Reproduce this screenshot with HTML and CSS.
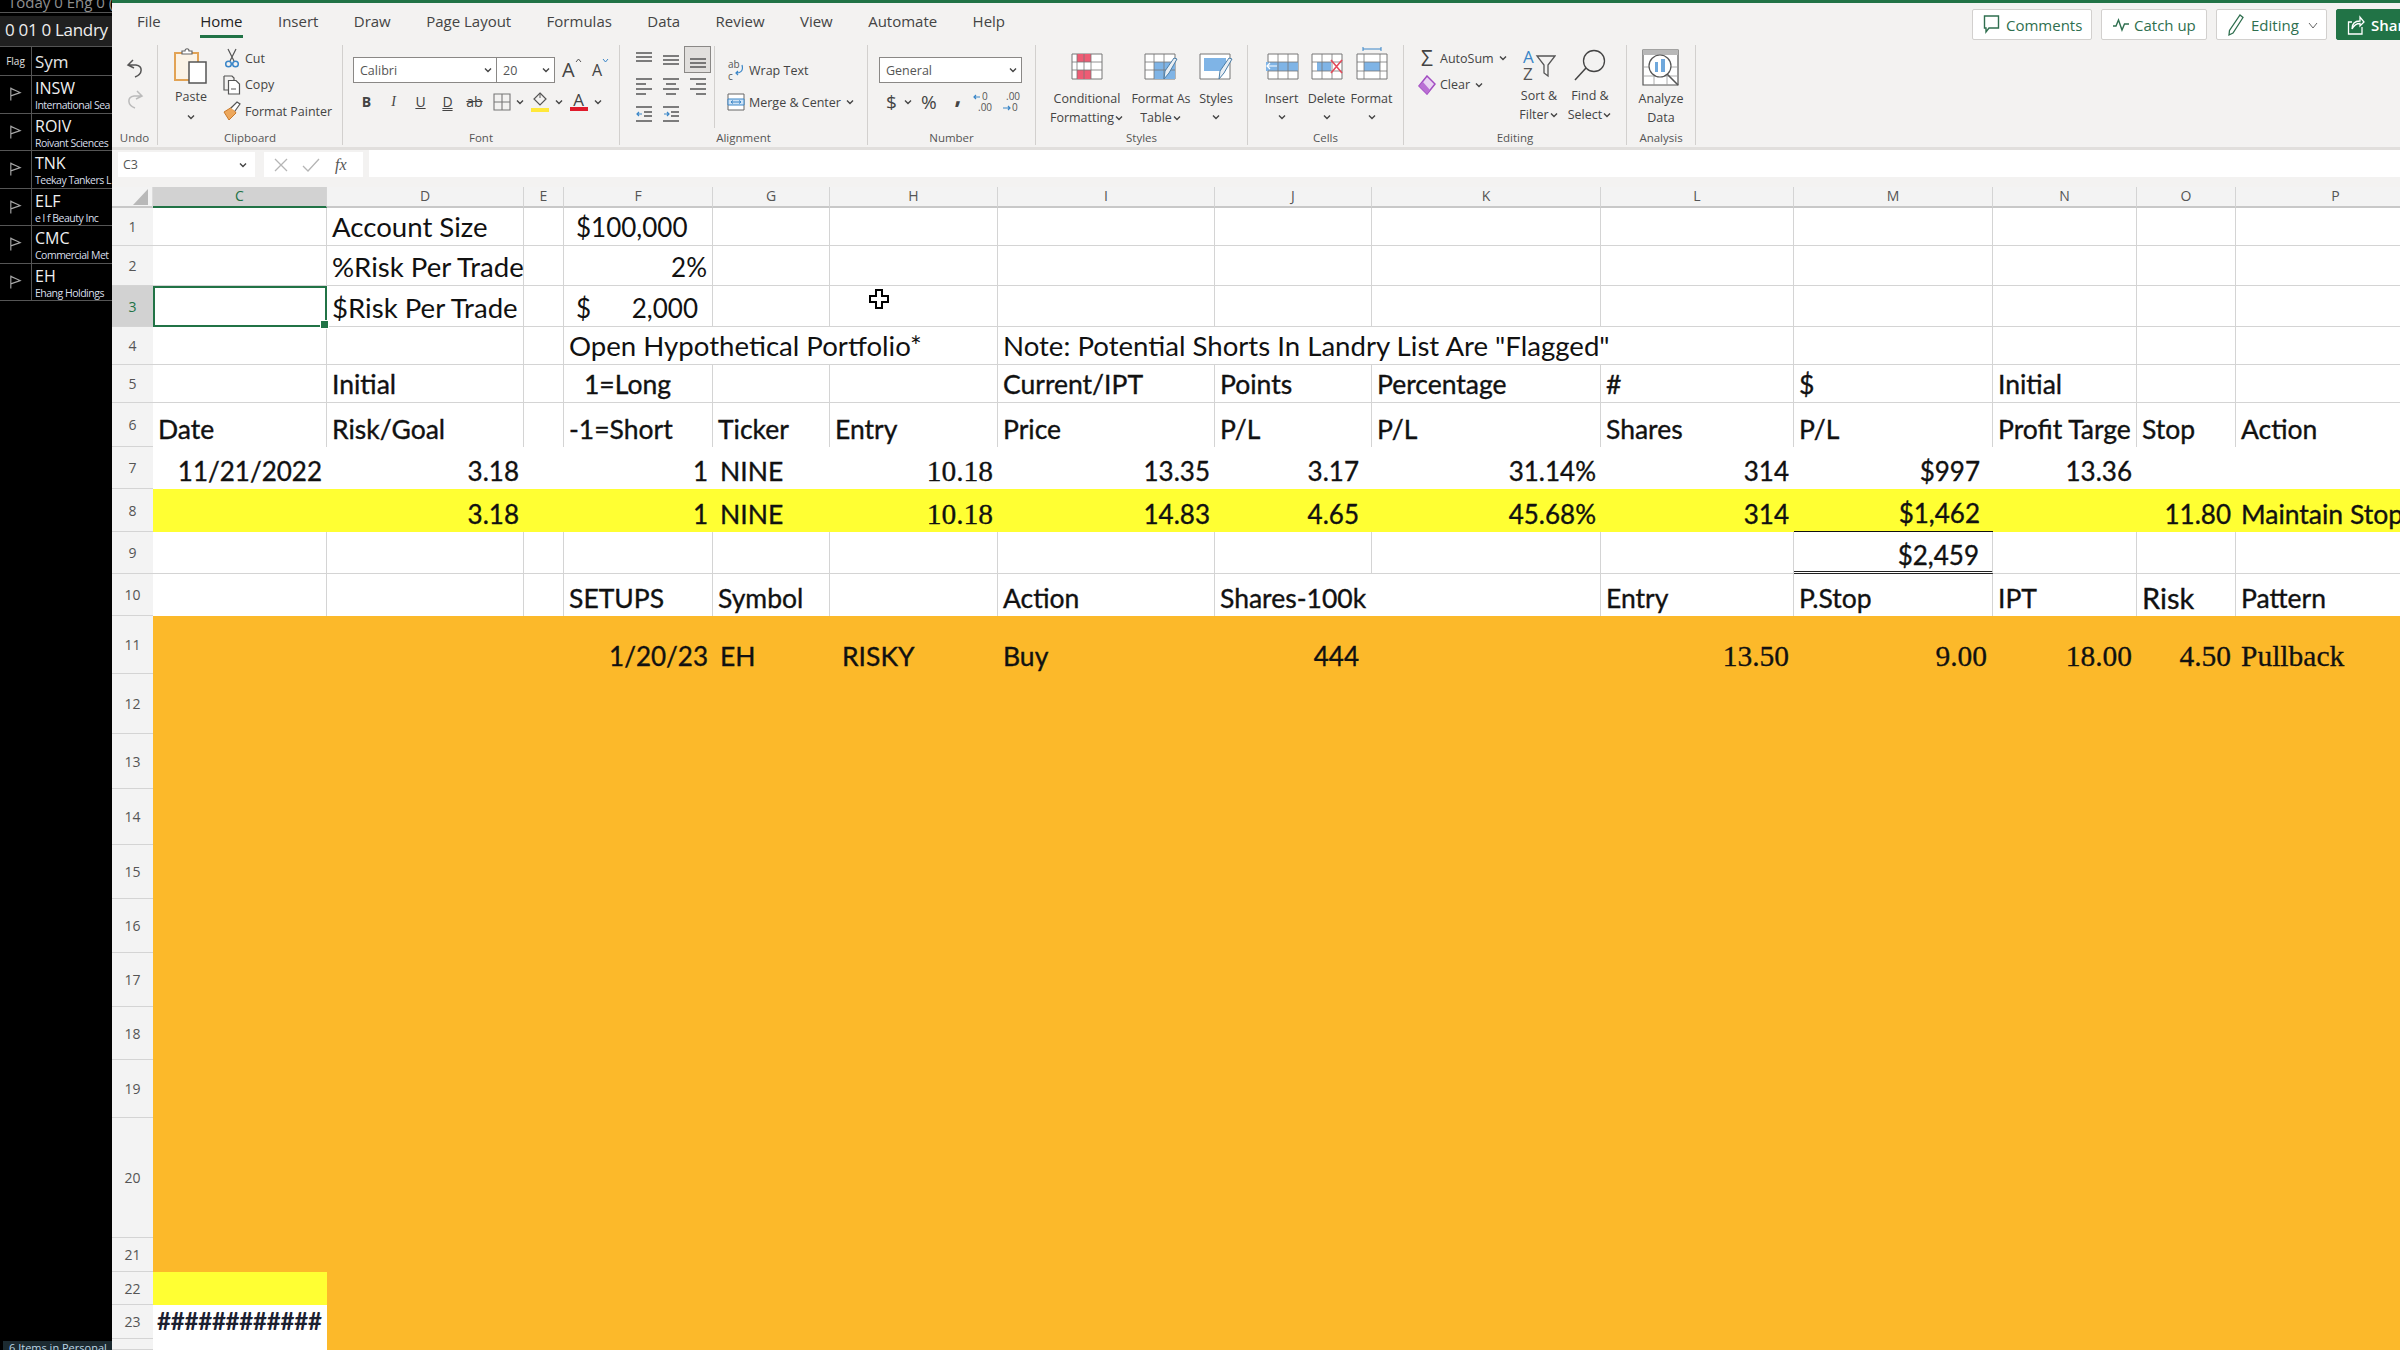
FILE: index.html
```html
<!DOCTYPE html>
<html>
<head>
<meta charset="utf-8">
<title>Excel - Open Hypothetical Portfolio</title>
<link rel="stylesheet" href="styles.css">
</head>
<body>
<svg class="defs" width="0" height="0">
  <symbol id="chev" viewBox="0 0 10 10"><path d="M2 3.5 5 6.5 8 3.5" fill="none" stroke="#444" stroke-width="1.4"/></symbol>
  <symbol id="flag" viewBox="0 0 16 16"><path d="M3 1V15M3 2 13 6.5 3 10" fill="none" stroke="#a8a8a8" stroke-width="1.2"/></symbol>
  <symbol id="al-top" viewBox="0 0 20 20"><path d="M2 3H18M2 7H18M2 11H18" stroke="#555" stroke-width="1.5"/></symbol>
  <symbol id="al-mid" viewBox="0 0 20 20"><path d="M2 6H18M2 10H18M2 14H18" stroke="#555" stroke-width="1.5"/></symbol>
  <symbol id="al-bot" viewBox="0 0 20 20"><path d="M2 9H18M2 13H18M2 17H18" stroke="#555" stroke-width="1.5"/></symbol>
  <symbol id="al-left" viewBox="0 0 20 20"><path d="M2 2H18M2 7H12M2 12H18M2 17H12" stroke="#555" stroke-width="1.5"/></symbol>
  <symbol id="al-center" viewBox="0 0 20 20"><path d="M2 2H18M5 7H15M2 12H18M5 17H15" stroke="#555" stroke-width="1.5"/></symbol>
  <symbol id="al-right" viewBox="0 0 20 20"><path d="M2 2H18M8 7H18M2 12H18M8 17H18" stroke="#555" stroke-width="1.5"/></symbol>
</svg>

<div class="app">
  <aside class="watch">
    <div class="watch-top">Today 0 Eng 0 (</div>
    <div class="watch-title">0 01 0 Landry</div>
    <div class="watch-head"><span class="flag-col">Flag</span><span class="sym-col">Sym</span></div>
    <div class="stock"><span class="flag-col"><svg class="flag"><use href="#flag"/></svg></span><div class="sym-col"><b>INSW</b><small>International Sea</small></div></div>
    <div class="stock"><span class="flag-col"><svg class="flag"><use href="#flag"/></svg></span><div class="sym-col"><b>ROIV</b><small>Roivant Sciences</small></div></div>
    <div class="stock"><span class="flag-col"><svg class="flag"><use href="#flag"/></svg></span><div class="sym-col"><b>TNK</b><small>Teekay Tankers L</small></div></div>
    <div class="stock"><span class="flag-col"><svg class="flag"><use href="#flag"/></svg></span><div class="sym-col"><b>ELF</b><small>e l f Beauty Inc</small></div></div>
    <div class="stock"><span class="flag-col"><svg class="flag"><use href="#flag"/></svg></span><div class="sym-col"><b>CMC</b><small>Commercial Met</small></div></div>
    <div class="stock"><span class="flag-col"><svg class="flag"><use href="#flag"/></svg></span><div class="sym-col"><b>EH</b><small>Ehang Holdings</small></div></div>
    <div class="watch-foot">6 Items in Personal</div>
  </aside>

  <main class="excel">
    <div class="tabs">
      <span class="tab file">File</span>
      <span class="tab active">Home</span>
      <span class="tab">Insert</span>
      <span class="tab">Draw</span>
      <span class="tab">Page Layout</span>
      <span class="tab">Formulas</span>
      <span class="tab">Data</span>
      <span class="tab">Review</span>
      <span class="tab">View</span>
      <span class="tab">Automate</span>
      <span class="tab">Help</span>
      <div class="actions">
        <span class="act act-comments"><svg width="17" height="21" viewBox="0 0 17 21"><path d="M1.5 2H15.5V14H6L3 18V14H1.5Z" fill="none" stroke="#2f6f4f" stroke-width="1.4"/></svg>Comments</span>
        <span class="act act-catch"><svg width="18" height="16" viewBox="0 0 18 16"><path d="M1 9 4 9 6.5 3 10 13 12.5 7 17 7" fill="none" stroke="#2f6f4f" stroke-width="1.4"/></svg>Catch up</span>
        <span class="act act-edit"><svg width="18" height="24" viewBox="0 0 18 24"><path d="M13 2 16 4.5 6 20 2 22 2.500 17.500Z" fill="none" stroke="#2f6f4f" stroke-width="1.3"/></svg>Editing<svg class="act-chev" width="12" height="12" viewBox="0 0 12 12"><path d="M2 4 6 9 10 4" fill="none" stroke="#666" stroke-width="1"/></svg></span>
        <span class="act share"><svg width="18" height="22" viewBox="0 0 18 22"><path d="M5 8H1.500V20H15V13M5 15C5 9 9 7 13 7V3L17 8 13 12V9.500C9 9.500 7 11 5 15Z" fill="none" stroke="#fff" stroke-width="1.3"/></svg>Share</span>
      </div>
    </div>

    <div class="ribbon">
      <section class="group g-undo">
        <div class="body undo-body">
          <svg width="20" height="22" viewBox="0 0 20 22"><path d="M8 2 3 7 9 10M3.500 7H11C18 8 18 16 10 19" fill="none" stroke="#555" stroke-width="1.5"/></svg>
          <svg width="20" height="22" viewBox="0 0 20 22"><path d="M12 2 17 7 11 10M16.500 7H9C2 8 2 16 10 19" fill="none" stroke="#bbb" stroke-width="1.5"/></svg>
        </div>
        <div class="label">Undo</div>
      </section>

      <section class="group g-clip">
        <div class="body clip-body">
          <div class="paste">
            <svg width="34" height="36" viewBox="0 0 34 36"><path d="M1 5H24V32H1Z" fill="#fbf3e6" stroke="#e2a355" stroke-width="2"/><path d="M8 6V3H11C11 0 15 0 15 3H18V6Z" fill="#fff" stroke="#666" stroke-width="1.2"/><path d="M15 14H32V35H15Z" fill="#fff" stroke="#555" stroke-width="1.5"/></svg>
            <span>Paste</span>
            <svg class="chev"><use href="#chev"/></svg>
          </div>
          <div class="clip-list">
            <div class="clip-row"><svg width="16" height="20" viewBox="0 0 16 20"><path d="M4 1 10 13M12 1 6 13" stroke="#555" stroke-width="1.2"/><circle cx="4.500" cy="16" r="2.800" fill="none" stroke="#3a86c8" stroke-width="1.500"/><circle cx="11.500" cy="16" r="2.800" fill="none" stroke="#3a86c8" stroke-width="1.500"/></svg>Cut</div>
            <div class="clip-row"><svg width="18" height="20" viewBox="0 0 18 20"><path d="M1 1H9L11 3V5M5 15H1V1" fill="none" stroke="#555" stroke-width="1.200"/><path d="M5.500 5.500H13L16.500 9V19H5.500Z" fill="#fff" stroke="#555" stroke-width="1.200"/><path d="M8 14H13" stroke="#555"/></svg>Copy</div>
            <div class="clip-row"><svg width="18" height="20" viewBox="0 0 18 20"><path d="M1 11 9 6 13 12 6 19Z" fill="#eda85d" stroke="#c97a2b"/><path d="M8 7 14 1 17 3 12 10" fill="#fff" stroke="#555" stroke-width="1.200"/></svg>Format Painter</div>
          </div>
        </div>
        <div class="label">Clipboard</div>
      </section>

      <section class="group g-font">
        <div class="body font-body">
          <div class="font-row">
            <div class="combo combo-font">Calibri<svg class="chev"><use href="#chev"/></svg></div>
            <div class="combo combo-size">20<svg class="chev"><use href="#chev"/></svg></div>
            <span class="grow">A<svg width="7" height="5" viewBox="0 0 7 5"><path d="M1 4 3.500 1 6 4" fill="none" stroke="#555"/></svg></span>
            <span class="shrink">A<svg width="7" height="5" viewBox="0 0 7 5"><path d="M1 1 3.500 4 6 1" fill="none" stroke="#3a86c8"/></svg></span>
          </div>
          <div class="font-row fmt-row">
            <span class="slot bold">B</span>
            <span class="slot ital">I</span>
            <span class="slot under">U</span>
            <span class="slot dbl">D</span>
            <span class="slot strike">ab</span>
            <span class="slot"><svg width="18" height="18" viewBox="0 0 18 18"><path d="M1 1H17V17H1ZM9 1V17M1 9H17" fill="none" stroke="#777" stroke-width="1.100"/></svg></span>
            <svg class="chev"><use href="#chev"/></svg>
            <span class="slot slot-col"><svg width="18" height="16" viewBox="0 0 18 16"><path d="M9 1 15 7 9 13 3 7Z" fill="none" stroke="#555" stroke-width="1.200"/><path d="M9 1V6" stroke="#555"/></svg><i class="bar bar-yellow"></i></span>
            <svg class="chev"><use href="#chev"/></svg>
            <span class="slot slot-col color-a">A<i class="bar bar-red"></i></span>
            <svg class="chev"><use href="#chev"/></svg>
          </div>
        </div>
        <div class="label">Font</div>
      </section>

      <section class="group g-align">
        <div class="body align-body">
          <div class="align-grid">
            <svg class="al"><use href="#al-top"/></svg>
            <svg class="al"><use href="#al-mid"/></svg>
            <span class="al-on"><svg class="al"><use href="#al-bot"/></svg></span>
            <svg class="al"><use href="#al-left"/></svg>
            <svg class="al"><use href="#al-center"/></svg>
            <svg class="al"><use href="#al-right"/></svg>
            <svg class="al" viewBox="0 0 20 20"><path d="M2 3H18M10 8H18M10 12H18M2 17H18" stroke="#555" stroke-width="1.500"/><path d="M8 10H3M5 8 3 10 5 12" fill="none" stroke="#3a86c8" stroke-width="1.200"/></svg>
            <svg class="al" viewBox="0 0 20 20"><path d="M2 3H18M10 8H18M10 12H18M2 17H18" stroke="#555" stroke-width="1.500"/><path d="M3 10H8M6 8 8 10 6 12" fill="none" stroke="#3a86c8" stroke-width="1.200"/></svg>
          </div>
          <div class="wrap-list">
            <div class="wrap-row"><svg width="18" height="24" viewBox="0 0 18 24"><text x="1" y="10" class="mini">ab</text><text x="1" y="22" class="mini">c</text><path d="M15 7C17 14 12 15 9 15M11 13 9 15 11 17" fill="none" stroke="#3a86c8" stroke-width="1.200"/></svg>Wrap Text</div>
            <div class="wrap-row"><svg width="18" height="20" viewBox="0 0 18 20"><path d="M1 2H17V18H1Z" fill="#fff" stroke="#666"/><path d="M1 7H17V13H1Z" fill="#cfe3f5" stroke="#3a86c8"/><path d="M4 10H14M6 8.500 4 10 6 11.500M12 8.500 14 10 12 11.500" fill="none" stroke="#3a86c8"/></svg>Merge &amp; Center<svg class="chev"><use href="#chev"/></svg></div>
          </div>
        </div>
        <div class="label">Alignment</div>
      </section>

      <section class="group g-num">
        <div class="body num-body">
          <div class="combo combo-num">General<svg class="chev"><use href="#chev"/></svg></div>
          <div class="num-row">
            <span class="num-dollar">$</span>
            <svg class="chev"><use href="#chev"/></svg>
            <span class="num-pct">%</span>
            <span class="num-comma">,</span>
            <svg width="20" height="22" viewBox="0 0 20 22"><text x="9" y="9" class="mini">0</text><text x="5" y="20" class="mini">.00</text><path d="M7 6H1M3 4 1 6 3 8" fill="none" stroke="#3a86c8" stroke-width="1.200"/></svg>
            <svg class="num-dec" width="20" height="22" viewBox="0 0 20 22"><text x="5" y="9" class="mini">.00</text><text x="11" y="20" class="mini">0</text><path d="M2 17H9M7 15 9 17 7 19" fill="none" stroke="#3a86c8" stroke-width="1.200"/></svg>
          </div>
        </div>
        <div class="label">Number</div>
      </section>

      <section class="group g-styles">
        <div class="body big-body">
          <div class="big w-cond">
            <svg width="32" height="27" viewBox="0 0 32 27"><path d="M1 1H31V26H1Z" fill="#fff" stroke="#777"/><path d="M6 1H20V9H6ZM6 17H20V26H6Z" fill="#ee5c74"/><path d="M1 9H31M1 17H31M6 1V26M13 1V26M20 1V26" stroke="#777" stroke-width=".8"/></svg>
            <span>Conditional</span>
            <span>Formatting<svg class="chev"><use href="#chev"/></svg></span>
          </div>
          <div class="big w-table">
            <svg width="34" height="27" viewBox="0 0 34 27"><path d="M1 1H31V26H1Z" fill="#fff" stroke="#777"/><path d="M10 9H31V26H10Z" fill="#7fb4e6"/><path d="M1 9H31M1 17H31M10 1V26M20 1V26" stroke="#777" stroke-width=".8"/><path d="M33 6 25 20 20 26 21 18 30 5Z" fill="#e9eef3" stroke="#4b7ea8"/></svg>
            <span>Format As</span>
            <span>Table<svg class="chev"><use href="#chev"/></svg></span>
          </div>
          <div class="big w-style">
            <svg width="34" height="27" viewBox="0 0 34 27"><path d="M1 1H31V26H1Z" fill="#fff" stroke="#777"/><path d="M5 5H27V18H5Z" fill="#7fb4e6"/><path d="M33 6 25 20 20 26 21 18 30 5Z" fill="#e9eef3" stroke="#4b7ea8"/></svg>
            <span>Styles</span>
            <svg class="chev"><use href="#chev"/></svg>
          </div>
        </div>
        <div class="label">Styles</div>
      </section>

      <section class="group g-cells">
        <div class="body big-body">
          <div class="big w-cell">
            <svg width="34" height="27" viewBox="0 0 34 27"><path d="M3 1H33V26H3Z" fill="#fff" stroke="#777"/><path d="M1 9H33V18H1Z" fill="#7fb4e6"/><path d="M3 9H33M3 18H33M13 1V26M23 1V26" stroke="#777" stroke-width=".8"/><path d="M12 13H2M5 10 2 13 5 16" fill="none" stroke="#fff" stroke-width="1.200"/></svg>
            <span>Insert</span>
            <svg class="chev"><use href="#chev"/></svg>
          </div>
          <div class="big w-cell">
            <svg width="32" height="27" viewBox="0 0 32 27"><path d="M1 1H31V26H1Z" fill="#fff" stroke="#777"/><path d="M6 9H20V18H6Z" fill="#7fb4e6"/><path d="M1 9H31M1 18H31M11 1V26M21 1V26" stroke="#777" stroke-width=".8"/><path d="M20 7 31 20M31 7 20 20" stroke="#e44a5a" stroke-width="1.600"/></svg>
            <span>Delete</span>
            <svg class="chev"><use href="#chev"/></svg>
          </div>
          <div class="big w-cell">
            <svg width="32" height="33" viewBox="0 0 32 33" class="fmt-cell"><path d="M7 2H25M7 0V4M25 0V4" stroke="#3a86c8"/><path d="M1 7H31V32H1Z" fill="#fff" stroke="#777"/><path d="M8 15H24V24H8Z" fill="#7fb4e6"/><path d="M1 15H31M1 24H31M8 7V32M24 7V32" stroke="#777" stroke-width=".8"/></svg>
            <span>Format</span>
            <svg class="chev"><use href="#chev"/></svg>
          </div>
        </div>
        <div class="label">Cells</div>
      </section>

      <section class="group g-edit">
        <div class="body edit-body">
          <div class="edit-list">
            <div class="clip-row"><span class="sigma">&Sigma;</span>AutoSum<svg class="chev"><use href="#chev"/></svg></div>
            <div class="clip-row"><svg class="eraser" width="18" height="20" viewBox="0 0 18 20"><path d="M9 1 17 9 9 19 1 11Z" fill="#e9d3f2" stroke="#a24cc2" stroke-width="1.500"/><path d="M1 11 9 19 12 15 5 7Z" fill="#b96fd4"/></svg>Clear<svg class="chev"><use href="#chev"/></svg></div>
          </div>
          <div class="big w-sort">
            <svg width="34" height="32" viewBox="0 0 34 32"><text x="1" y="14" class="az az-a">A</text><text x="1" y="31" class="az">Z</text><path d="M15 7H33L26 16V27L22 24V16Z" fill="none" stroke="#555" stroke-width="1.300"/></svg>
            <span>Sort &amp;</span>
            <span>Filter<svg class="chev"><use href="#chev"/></svg></span>
          </div>
          <div class="big w-find">
            <svg width="34" height="32" viewBox="0 0 34 32"><circle cx="21" cy="12" r="10.500" fill="none" stroke="#444" stroke-width="1.300"/><path d="M13 19 2 31" stroke="#444" stroke-width="1.500"/></svg>
            <span>Find &amp;</span>
            <span>Select<svg class="chev"><use href="#chev"/></svg></span>
          </div>
        </div>
        <div class="label">Editing</div>
      </section>

      <section class="group g-analysis">
        <div class="body big-body">
          <div class="big w-analyze">
            <svg width="38" height="37" viewBox="0 0 38 37"><path d="M1 1H36V36H1Z" fill="#fff" stroke="#555" stroke-width="1.200"/><path d="M1 1H36V6H1Z" fill="#b8b8b8"/><path d="M1 18H36M1 27H36M12 27V36M25 27V36" stroke="#999" stroke-width=".8"/><circle cx="18" cy="17" r="11" fill="#fff" stroke="#555" stroke-width="1.200"/><path d="M13 13H16V23H13ZM19 10H23V23H19Z" fill="#6fa8dc"/><path d="M25 25 36 36" stroke="#555" stroke-width="1.600"/></svg>
            <span>Analyze</span>
            <span>Data</span>
          </div>
        </div>
        <div class="label">Analysis</div>
      </section>
    </div>

    <div class="fbar">
      <div class="namebox">C3<svg class="chev"><use href="#chev"/></svg></div>
      <div class="fctl">
        <svg width="16" height="16" viewBox="0 0 16 16"><path d="M2 2 14 14M14 2 2 14" stroke="#b5b5b5" stroke-width="1.300"/></svg>
        <svg width="18" height="16" viewBox="0 0 18 16"><path d="M1 9 6 14 17 2" fill="none" stroke="#b5b5b5" stroke-width="1.300"/></svg>
        <span class="fx">fx</span>
      </div>
      <div class="finput"></div>
    </div>

    <div class="sheet">
      <!-- column headers -->
      <div class="corner"><svg width="18" height="18" viewBox="0 0 18 18"><path d="M16 1V17H1Z" fill="#b8b8b8"/></svg></div>
      <div class="ch ch-on">C</div><div class="ch">D</div><div class="ch">E</div><div class="ch">F</div><div class="ch">G</div><div class="ch">H</div><div class="ch">I</div><div class="ch">J</div><div class="ch">K</div><div class="ch">L</div><div class="ch">M</div><div class="ch">N</div><div class="ch">O</div><div class="ch">P</div>

      <!-- 1 -->
      <div class="rh">1</div><div class="c"></div><div class="c t">Account Size</div><div class="c"></div><div class="c in">$100,000</div><div class="c"></div><div class="c"></div><div class="c"></div><div class="c"></div><div class="c"></div><div class="c"></div><div class="c"></div><div class="c"></div><div class="c"></div><div class="c"></div>
      <!-- 2 -->
      <div class="rh">2</div><div class="c"></div><div class="c t">%Risk Per Trade</div><div class="c"></div><div class="c r">2%</div><div class="c"></div><div class="c"></div><div class="c"></div><div class="c"></div><div class="c"></div><div class="c"></div><div class="c"></div><div class="c"></div><div class="c"></div><div class="c"></div>
      <!-- 3 -->
      <div class="rh rh-on">3</div><div class="c sel"></div><div class="c t">$Risk Per Trade</div><div class="c"></div><div class="c acct"><span>$</span><span>2,000</span></div><div class="c"></div><div class="c"></div><div class="c"></div><div class="c"></div><div class="c"></div><div class="c"></div><div class="c"></div><div class="c"></div><div class="c"></div><div class="c"></div>
      <!-- 4 -->
      <div class="rh">4</div><div class="c"></div><div class="c"></div><div class="c"></div><div class="c s3 t">Open Hypothetical Portfolio*</div><div class="c s4 t">Note: Potential Shorts In Landry List Are "Flagged"</div><div class="c"></div><div class="c"></div><div class="c"></div><div class="c"></div>
      <!-- 5 -->
      <div class="rh">5</div><div class="c"></div><div class="c h">Initial</div><div class="c"></div><div class="c h long">1=Long</div><div class="c"></div><div class="c"></div><div class="c h">Current/IPT</div><div class="c h">Points</div><div class="c h">Percentage</div><div class="c h">#</div><div class="c h">$</div><div class="c h">Initial</div><div class="c"></div><div class="c"></div>
      <!-- 6 -->
      <div class="rh">6</div><div class="c nb h">Date</div><div class="c nb h">Risk/Goal</div><div class="c nb"></div><div class="c nb h">-1=Short</div><div class="c nb h">Ticker</div><div class="c nb h">Entry</div><div class="c nb h">Price</div><div class="c nb h">P/L</div><div class="c nb h">P/L</div><div class="c nb h">Shares</div><div class="c nb h">P/L</div><div class="c nb h targe">Profit Targe</div><div class="c nb h">Stop</div><div class="c nb h">Action</div>
      <!-- 7 -->
      <div class="rh">7</div><div class="c x r v">11/21/2022</div><div class="c x r v">3.18</div><div class="c x"></div><div class="c x r v">1</div><div class="c x h tick">NINE</div><div class="c x r serif">10.18</div><div class="c x r v">13.35</div><div class="c x r v pad">3.17</div><div class="c x r v">31.14%</div><div class="c x r v">314</div><div class="c x r v pad">$997</div><div class="c x r v">13.36</div><div class="c x"></div><div class="c x"></div>
      <!-- 8 -->
      <div class="rh">8</div><div class="c x y"></div><div class="c x y r v">3.18</div><div class="c x y"></div><div class="c x y r v">1</div><div class="c x y h tick">NINE</div><div class="c x y r serif">10.18</div><div class="c x y r v">14.83</div><div class="c x y r v pad">4.65</div><div class="c x y r v">45.68%</div><div class="c x y r v">314</div><div class="c x y r v pad sub">$1,462</div><div class="c x y"></div><div class="c x y r v">11.80</div><div class="c x y h">Maintain Stop</div>
      <!-- 9 -->
      <div class="rh">9</div><div class="c"></div><div class="c"></div><div class="c"></div><div class="c"></div><div class="c"></div><div class="c"></div><div class="c"></div><div class="c"></div><div class="c"></div><div class="c"></div><div class="c r v pad total">$2,459</div><div class="c"></div><div class="c"></div><div class="c"></div>
      <!-- 10 -->
      <div class="rh">10</div><div class="c nb"></div><div class="c nb"></div><div class="c nb"></div><div class="c nb h">SETUPS</div><div class="c nb h">Symbol</div><div class="c nb"></div><div class="c nb h">Action</div><div class="c nb s2 h">Shares-100k</div><div class="c nb h">Entry</div><div class="c nb h">P.Stop</div><div class="c nb h">IPT</div><div class="c nb h risk">Risk</div><div class="c nb h">Pattern</div>
      <!-- 11 -->
      <div class="rh">11</div><div class="c x o"></div><div class="c x o"></div><div class="c x o"></div><div class="c x o r v">1/20/23</div><div class="c x o h tick">EH</div><div class="c x o h risky">RISKY</div><div class="c x o h">Buy</div><div class="c x o r v pad">444</div><div class="c x o"></div><div class="c x o r serif">13.50</div><div class="c x o r serif tight">9.00</div><div class="c x o r serif">18.00</div><div class="c x o r serif">4.50</div><div class="c x o serif">Pullback</div>
      <!-- 12 to 21 are one orange block -->
      <div class="rh">12</div><div class="fill fill-wide"></div>
      <div class="rh">13</div>
      <div class="rh">14</div>
      <div class="rh">15</div>
      <div class="rh">16</div>
      <div class="rh">17</div>
      <div class="rh">18</div>
      <div class="rh">19</div>
      <div class="rh">20</div>
      <div class="rh">21</div>
      <!-- 22 to 24 -->
      <div class="rh">22</div><div class="c x y"></div><div class="fill fill-rest"></div>
      <div class="rh">23</div><div class="c x hashes">############</div>
      <div class="rh"></div><div class="c x"></div>

      <svg class="cursor" width="20" height="20" viewBox="0 0 20 20"><path d="M7 1H13V7H19V13H13V19H7V13H1V7H7Z" fill="#fff" stroke="#000" stroke-width="2"/></svg>
    </div>
  </main>
</div>
</body>
</html>
```

FILE: styles.css
```css
* { box-sizing: border-box; }

html, body {
    margin: 0;
    width: 2400px;
    height: 1350px;
    overflow: hidden;
    background: #000;
}

.defs { position: absolute; }

.app {
    display: flex;
    width: 2400px;
    height: 1350px;
    overflow: hidden;
}

/* Watch list on the left */
.watch {
    width: 112px;
    flex: none;
    display: flex;
    flex-direction: column;
    overflow: hidden;
    position: relative;
    background: #000;
    color: #e6e6e6;
    font-family: "Open Sans", sans-serif;
    white-space: nowrap;
}

.watch-top {
    line-height: 11px;
    margin-top: -3px;
    height: 16px;
    font-size: 15px;
    color: #8f8f8f;
    padding-left: 8px;
    border-bottom: 1px solid #555;
}

.watch-title {
    height: 31px;
    margin-top: 3px;
    background: #202020;
    padding-left: 5px;
    font-size: 17px;
    letter-spacing: -.3px;
    line-height: 27px;
    color: #ededed;
    border-bottom: 1px solid #555;
}

.watch-head {
    display: flex;
    height: 29px;
    align-items: center;
    border-bottom: 1px solid #555;
}

.flag-col {
    width: 32px;
    flex: none;
    display: flex;
    justify-content: center;
    align-self: stretch;
    align-items: center;
    border-right: 1px solid #555;
    font-size: 10px;
    color: #e0e0e0;
}

.sym-col {
    padding-left: 3px;
    font-size: 17px;
}

.stock {
    display: flex;
    height: 37.5px;
    border-bottom: 1px solid #555;
}

.stock .sym-col {
    display: flex;
    flex-direction: column;
    padding-top: 2px;
}

.stock b {
    font-weight: 400;
    font-size: 16px;
    line-height: 21px;
    color: #f0f0f0;
}

.stock small {
    font-size: 10.5px;
    line-height: 13px;
    letter-spacing: -.5px;
    color: #d8dfea;
}

.flag { width: 15px; height: 16px; }

.watch-foot {
    position: absolute;
    left: 3px;
    bottom: -6px;
    width: 109px;
    height: 15px;
    background: #1c2a30;
    color: #bcd6e4;
    font-size: 11px;
    line-height: 14px;
    padding-left: 6px;
}

/* Excel window */
.excel {
    flex: 1;
    min-width: 0;
    display: flex;
    flex-direction: column;
    background: #f3f2f1;
    font-family: "Open Sans", sans-serif;
    color: #444;
    font-size: 12.5px;
    white-space: nowrap;
    border-top: 3px solid #217346;
}

.tabs {
    height: 42px;
    flex: none;
    display: flex;
    align-items: flex-start;
    gap: 35.4px;
    padding-left: 25px;
    font-size: 15px;
}

.tab {
    padding-top: 8px;
    height: 35px;
    position: relative;
}

.tab.file { margin-right: 4px; }

.tab.active {
    color: #222;
    font-weight: 500;
}

.tab.active::after {
    content: "";
    position: absolute;
    left: 0;
    right: 0;
    bottom: 0;
    height: 3px;
    background: #217346;
}

.actions {
    margin-left: auto;
    display: flex;
    gap: 9px;
    padding-top: 6px;
    margin-right: -60px;
}

.act {
    height: 31px;
    display: flex;
    align-items: center;
    gap: 6px;
    background: #fff;
    border: 1px solid #d2d0ce;
    border-radius: 2px;
    color: #2f6f4f;
    font-size: 15px;
    padding-left: 10px;
}

.act-comments { width: 120px; }
.act-catch { width: 106px; gap: 4px; }
.act-edit { width: 111px; }
.act-chev { margin-left: 2px; }

.share {
    width: 124px;
    background: #217346;
    border-color: #217346;
    color: #fff;
    font-weight: 600;
}

/* Ribbon */
.ribbon {
    height: 105px;
    flex: none;
    display: flex;
    border-bottom: 3px solid #e1dfdd;
}

.group {
    display: flex;
    flex-direction: column;
    height: 100px;
    flex: none;
    border-right: 1px solid #d2d0ce;
}

.body {
    flex: 1;
    min-height: 0;
    display: flex;
}

.label {
    height: 14px;
    line-height: 14px;
    text-align: center;
    font-size: 11.5px;
    color: #555;
}

.g-undo { width: 46px; }
.g-clip { width: 185px; }
.g-font { width: 277px; }
.g-align { width: 248px; }
.g-num { width: 168px; }
.g-styles { width: 212px; }
.g-cells { width: 156px; }
.g-edit { width: 223px; }
.g-analysis { width: 69px; }

.chev {
    width: 10px;
    height: 10px;
    flex: none;
}

.undo-body {
    flex-direction: column;
    align-items: center;
    gap: 9px;
    padding-top: 13px;
}

.clip-body { padding-left: 5px; }

.paste {
    width: 56px;
    display: flex;
    flex-direction: column;
    align-items: center;
    padding-top: 3px;
}

.paste span { margin-top: 4px; line-height: 18px; }
.paste .chev { margin-top: 6px; }

.clip-list { padding-left: 4px; }

.clip-row {
    height: 26.5px;
    display: flex;
    align-items: center;
    gap: 4px;
}

.clip-row svg:first-child { width: 18px; }

/* Font group */
.font-body {
    flex-direction: column;
    padding: 12px 0 0 10px;
}

.font-row {
    display: flex;
    align-items: center;
}

.combo {
    height: 26px;
    background: #fff;
    border: 1px solid #8a8886;
    display: flex;
    align-items: center;
    justify-content: space-between;
    padding: 0 3px 0 6px;
    color: #555;
}

.combo-font { width: 143px; border-right: 0; }
.combo-size { width: 59px; }
.combo-num { width: 143px; }

.grow, .shrink {
    display: flex;
    align-items: flex-start;
    margin-left: 7px;
    width: 22px;
    font-size: 20px;
    line-height: 24px;
    color: #444;
}

.shrink { font-size: 16px; margin-left: 8px; }

.fmt-row {
    margin-top: 5px;
    height: 27px;
}

.slot {
    width: 27px;
    display: flex;
    justify-content: center;
    align-items: center;
    font-size: 14px;
    color: #444;
}

.slot-col {
    width: 29px;
    flex-direction: column;
    line-height: 14px;
}

.bold { font-weight: 700; }
.ital { font-style: italic; font-family: "Liberation Serif", serif; }
.under { text-decoration: underline; }
.dbl { text-decoration: underline double; }
.strike { text-decoration: line-through; }

.bar {
    display: block;
    width: 18px;
    height: 4px;
}

.bar-yellow { background: #ffe83a; }
.bar-red { background: #e01b2b; }
.color-a { font-size: 17px; }

/* Alignment group */
.align-body { padding: 1px 0 0 10px; }

.align-grid {
    width: 85px;
    display: grid;
    grid-template-columns: repeat(3, 27px);
    grid-auto-rows: 27px;
    place-items: center;
    height: 82px;
    border-right: 1px solid #d2d0ce;
}

.al { width: 20px; height: 20px; }

.al-on {
    width: 27px;
    height: 27px;
    display: flex;
    align-items: center;
    justify-content: center;
    background: #e1dfdd;
    border: 1px solid #8a8886;
}

.wrap-list {
    padding: 8px 0 0 12px;
}

.wrap-row {
    height: 32px;
    display: flex;
    align-items: center;
    gap: 4px;
}

.mini {
    font-size: 10px;
    fill: #555;
}

/* Number group */
.num-body {
    flex-direction: column;
    padding: 12px 0 0 11px;
}

.num-row {
    margin-top: 5px;
    height: 27px;
    display: flex;
    align-items: center;
    gap: 6px;
    padding-left: 7px;
}

.num-dollar, .num-pct, .num-comma {
    font-size: 19px;
    line-height: 26px;
}

.num-pct { margin-left: 2px; }
.num-comma { font-size: 24px; font-weight: 700; width: 12px; margin: -14px 0 0 12px; }
.num-dec { margin-left: 2px; }

/* Big buttons with two label lines */
.big-body { padding-left: 11px; }

.big {
    display: flex;
    flex-direction: column;
    align-items: center;
    padding-top: 8px;
    line-height: 19px;
}

.big > svg:first-child {
    height: 27px;
    margin-bottom: 9px;
    flex: none;
}

.big span {
    display: flex;
    align-items: center;
}

.big > .chev { margin-top: 4px; }

.w-cond { width: 80px; }
.w-table { width: 68px; }
.w-style { width: 42px; }
.w-cell { width: 45px; }
.w-sort { width: 50px; }
.w-find { width: 52px; }
.w-analyze { width: 60px; padding-top: 4px; }

.g-analysis .big-body { padding-left: 4px; }
.big > svg.fmt-cell { height: 33px; margin: -6px 0 9px; }
.w-sort > svg:first-child, .w-find > svg:first-child { height: 32px; margin: -4px 0 5px; }
.w-analyze > svg:first-child { height: 37px; margin: 0 0 3px; }

.edit-body { padding-left: 14px; }
.edit-list { width: 96px; }

.sigma {
    width: 18px;
    font-size: 21px;
    line-height: 24px;
    text-align: center;
}

.az {
    font-size: 17px;
    fill: #555;
}

.az-a { fill: #3a86c8; }

/* Formula bar */
.fbar {
    height: 27px;
    flex: none;
    display: flex;
    gap: 6px;
    padding-left: 6px;
    background: #f3f2f1;
    color: #555;
}

.namebox, .fctl, .finput {
    background: #fff;
    display: flex;
    align-items: center;
}

.namebox {
    width: 137px;
    justify-content: space-between;
    padding: 0 7px 0 5px;
    margin: 2px 3px 0 0;
}

.fctl {
    width: 99px;
    gap: 13px;
    padding-left: 9px;
    margin-top: 2px;
}

.fx {
    font-family: "Liberation Serif", serif;
    font-style: italic;
    font-size: 16px;
    margin-left: 2px;
}

.finput { flex: 1; margin-right: 0; }

/* Sheet */
.sheet {
    flex: 1;
    min-height: 0;
    position: relative;
    display: grid;
    margin-top: 10px;
    background: #fff;
    grid-template-columns: 41px 174px 197px 40px 149px 117px 168px 217px 157px 229px 193px 199px 144px 99px 200px;
    grid-template-rows: 21px 38px 40px 41px 38px 38px 44px 42px 43px 42px 42px 58px 60px 55px 56px 54px 54px 54px 53px 58px 120px 34px 33px 34px 11px;
    font-family: Lato, sans-serif;
    font-size: 26px;
    color: #111;
    overflow: hidden;
}

.corner {
    background: #f3f3f3;
    border-bottom: 2px solid #c8c8c8;
    border-right: 1px solid #dcdcdc;
    display: flex;
    align-items: center;
    justify-content: flex-end;
    padding-right: 2px;
}

.ch {
    background: #f3f3f3;
    border-right: 1px solid #d4d4d4;
    border-bottom: 2px solid #c8c8c8;
    text-align: center;
    font-family: "Open Sans", sans-serif;
    font-size: 14px;
    line-height: 18px;
    color: #555;
}

.ch-on {
    background: #d2d2d2;
    border-bottom-color: #217346;
    color: #217346;
}

.rh {
    grid-column: 1;
    background: #f3f3f3;
    border-bottom: 1px solid #d4d4d4;
    display: flex;
    align-items: center;
    justify-content: center;
    font-family: "Open Sans", sans-serif;
    font-size: 14px;
    color: #555;
}

.rh-on {
    background: #d2d2d2;
    color: #217346;
}

.c {
    display: flex;
    align-items: flex-end;
    padding: 0 5px 3px;
    line-height: 30px;
    white-space: nowrap;
    border-right: 1px solid #d4d4d4;
    border-bottom: 1px solid #d4d4d4;
    min-width: 0;
}

.r { justify-content: flex-end; }
.nb { border-bottom: 0; }
.x { border-right: 0; border-bottom: 0; }
.y { background: #ffff33; }
.o { background: #fcb92a; }
.t { font-size: 27.6px; }
.h { font-size: 26.5px; -webkit-text-stroke: .35px #111; }
.v { -webkit-text-stroke: .35px #111; }
.s2 { grid-column: span 2; }
.s3 { grid-column: span 3; }
.s4 { grid-column: span 4; }
.in { padding-left: 12px; }
.long { padding-left: 20px; }
.acct { justify-content: space-between; padding: 0 14px 3px 12px; }
.tick { padding-left: 7px; }
.pad { padding-right: 13px; }
.tight { padding-right: 6px; }
.risky { padding-left: 12px; }
.risk { font-size: 29px; }
.sub { border-bottom: 1px solid #111; }
.total { border-bottom: 3px double #222; padding-bottom: 1px; }
.targe { padding-right: 0; }

.serif {
    font-family: "Liberation Serif", serif;
    font-size: 29.5px;
    -webkit-text-stroke: .3px #111;
}

.sel {
    position: relative;
    border: 2px solid #217346;
}

.sel::after {
    content: "";
    position: absolute;
    right: -4px;
    bottom: -4px;
    width: 7px;
    height: 7px;
    background: #217346;
    border: 1px solid #fff;
}

.fill { background: #fcb92a; }
.fill-wide { grid-column: 2 / -1; grid-row: span 10; }
.fill-rest { grid-column: 3 / -1; grid-row: span 3; }

.hashes {
    padding-left: 4px;
    font-size: 24px;
    letter-spacing: -.2px;
    color: #1b2030;
    font-weight: 700;
}

.cursor {
    position: absolute;
    left: 757px;
    top: 102px;
}
```
